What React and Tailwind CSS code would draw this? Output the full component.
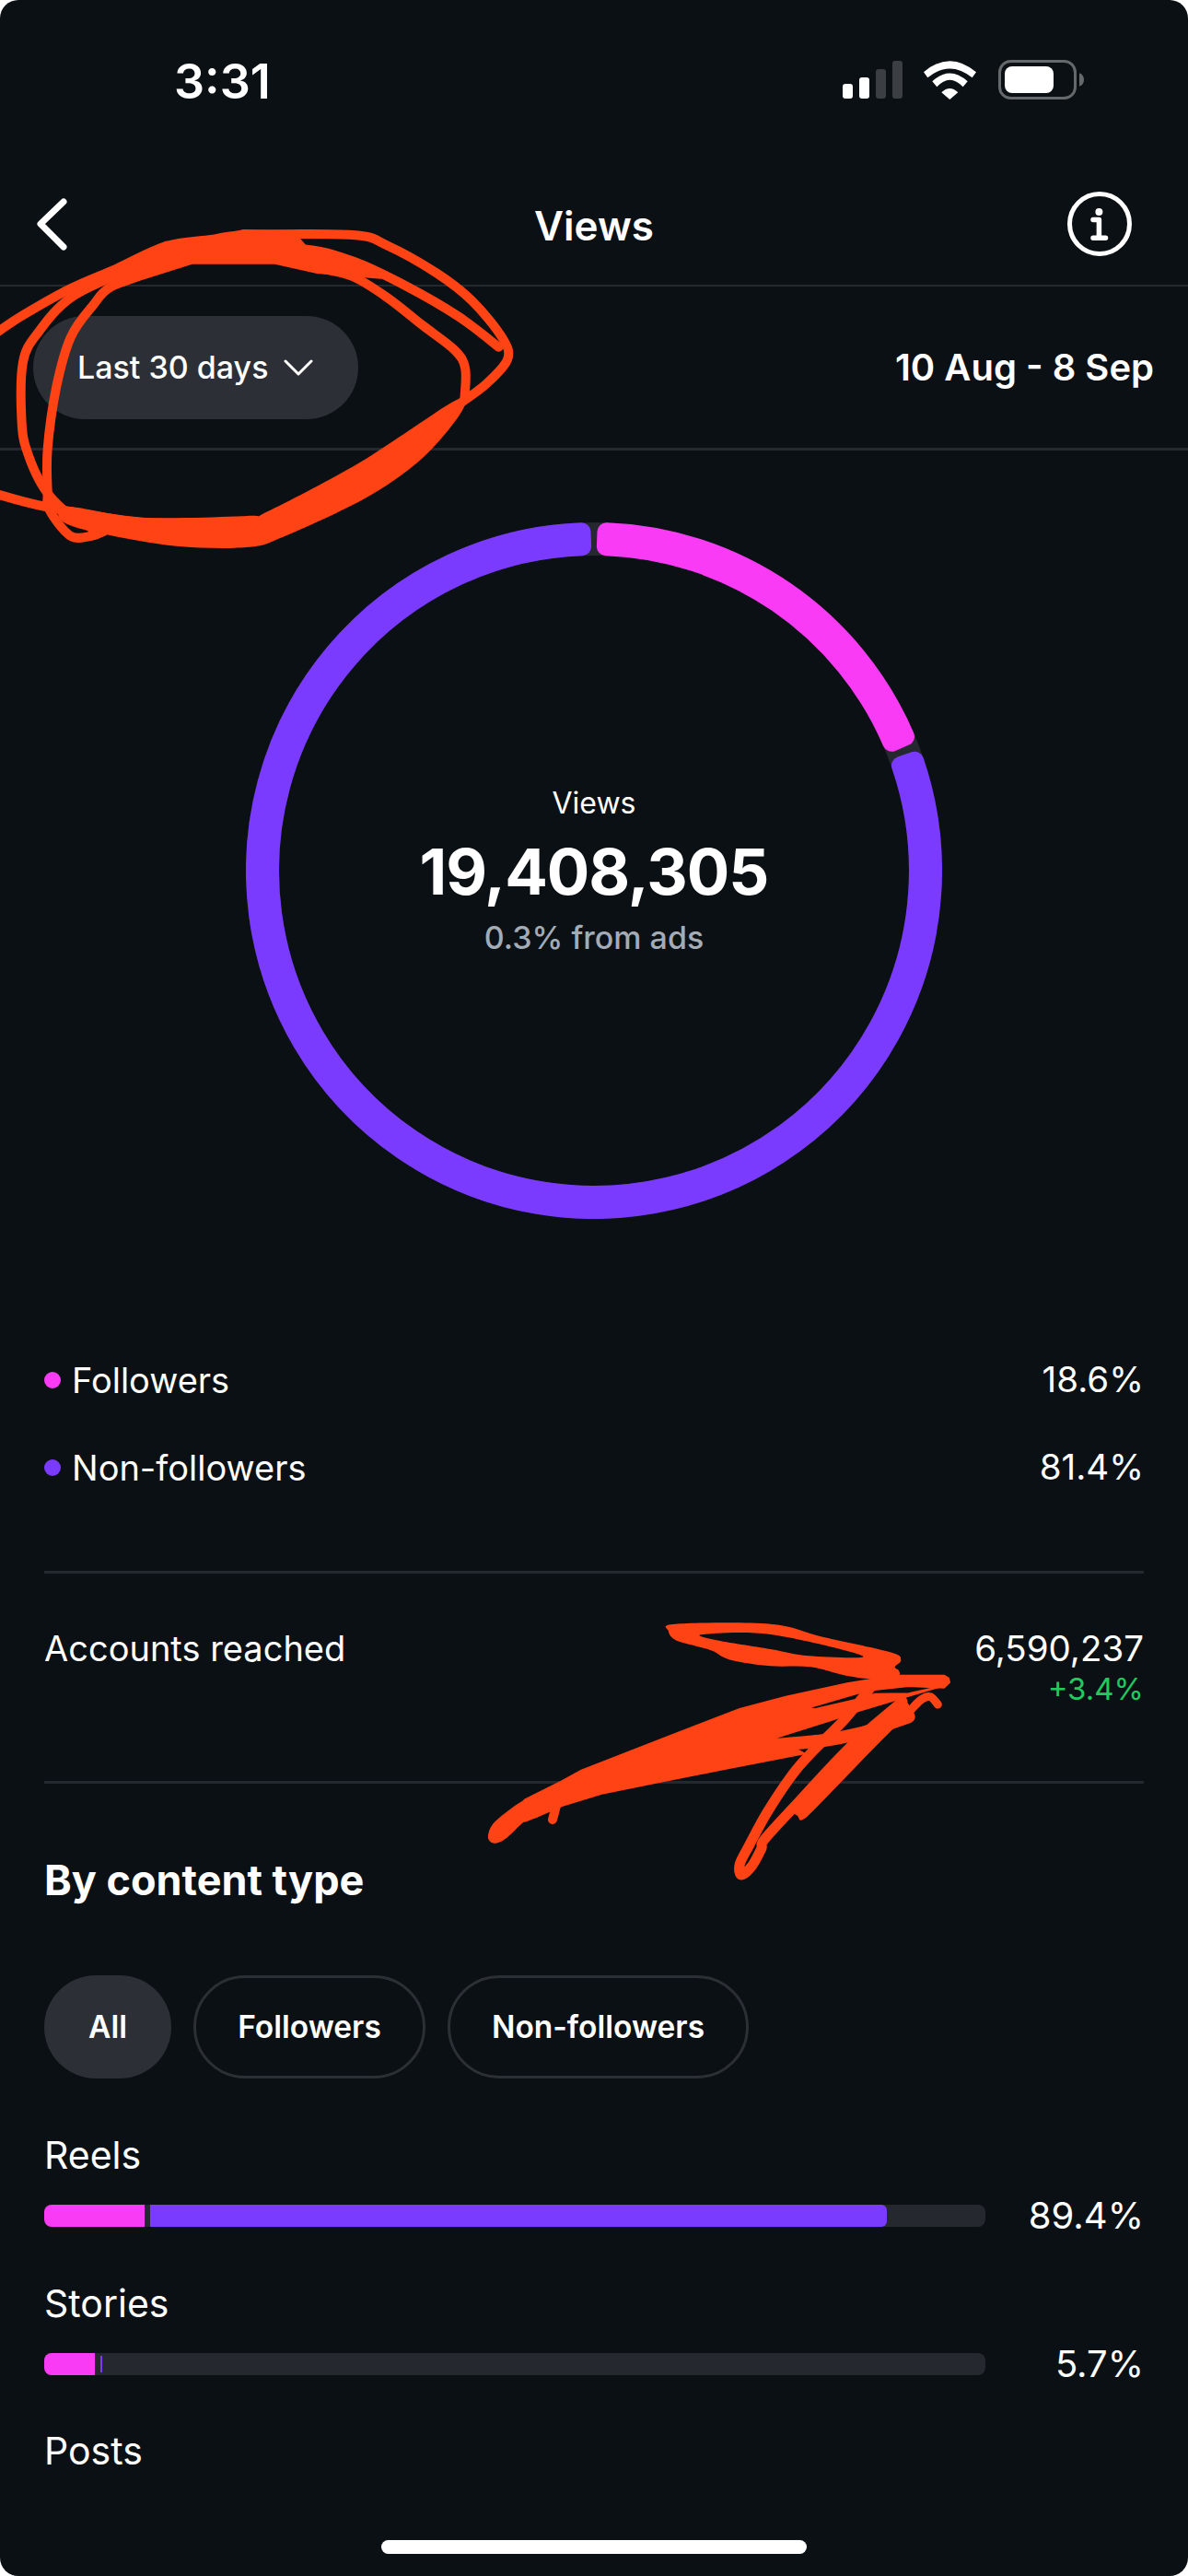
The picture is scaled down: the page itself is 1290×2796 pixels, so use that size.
import React from "react";

const PINK = "#f93bf5";
const PURPLE = "#7b3bff";
const RED = "#ff4314";

function polar(r, deg) {
  const a = (deg * Math.PI) / 180;
  return [378 + r * Math.sin(a), 378 - r * Math.cos(a)];
}
function band(from, to) {
  const inner = 352;
  const outer = 368;
  const large = to - from > 180 ? 1 : 0;
  const [x1, y1] = polar(outer, from);
  const [x2, y2] = polar(outer, to);
  const [x3, y3] = polar(inner, to);
  const [x4, y4] = polar(inner, from);
  return `M${x1} ${y1}A${outer} ${outer} 0 ${large} 1 ${x2} ${y2}L${x3} ${y3}A${inner} ${inner} 0 ${large} 0 ${x4} ${y4}Z`;
}

function curve(pts, ox, oy, sx, sy, closed) {
  const p = pts.map(([x, y]) => [ox + x / sx, oy + y / sy]);
  const n = p.length;
  const at = (i) => (closed ? p[(i + n) % n] : p[Math.max(0, Math.min(n - 1, i))]);
  let d = `M${p[0][0].toFixed(1)} ${p[0][1].toFixed(1)}`;
  const last = closed ? n : n - 1;
  for (let i = 0; i < last; i++) {
    const a = at(i - 1), b = at(i), c = at(i + 1), e = at(i + 2);
    const c1 = [b[0] + (c[0] - a[0]) / 6, b[1] + (c[1] - a[1]) / 6];
    const c2 = [c[0] - (e[0] - b[0]) / 6, c[1] - (e[1] - b[1]) / 6];
    d += `C${c1[0].toFixed(1)} ${c1[1].toFixed(1)} ${c2[0].toFixed(1)} ${c2[1].toFixed(1)} ${c[0].toFixed(1)} ${c[1].toFixed(1)}`;
  }
  return d + (closed ? "Z" : "");
}
function poly(pts, ox, oy, sx, sy) {
  return "M" + pts.map(([x, y]) => `${(ox + x / sx).toFixed(1)} ${(oy + y / sy).toFixed(1)}`).join("L") + "Z";
}

const C = (pts) => curve(pts, 0, 220, 2.613, 3, false);
const CF = (pts) => curve(pts, 0, 220, 2.613, 3, true);
const CP = (pts) => poly(pts, 0, 220, 2.613, 3);
const A = (pts) => curve(pts, 520, 1750, 3, 3, false);
const AF = (pts) => curve(pts, 520, 1750, 3, 3, true);
const AP = (pts) => poly(pts, 520, 1750, 3, 3);

function Scribbles() {
  return (
    <svg className="absolute left-0 top-0 pointer-events-none" width="1290" height="2796" viewBox="0 0 1290 2796" fill="none">
      <g stroke={RED} strokeWidth="10" strokeLinecap="round" strokeLinejoin="round">
        <path d={C([[-20,432],[60,370],[200,280],[330,215],[470,142],[600,120],[700,105],[1000,105],[1100,140],[1240,230],[1340,320],[1425,440],[1440,510],[1380,590],[1310,650]])} />
        <path d={C([[1415,470],[1300,370],[1150,270],[1000,190],[850,150],[600,160],[470,160],[350,225],[200,310],[110,420],[65,520],[62,720],[80,820],[125,930],[185,1005],[260,1060]])} />
        <path d={C([[1318,640],[1320,540],[1290,480],[1200,400],[1100,310],[1000,240],[900,212],[780,180],[540,180],[330,265],[260,340],[200,440],[160,600],[135,800],[135,940],[140,1000],[200,1085],[260,1085],[295,1070]])} />
        <path d={C([[-20,945],[130,990],[400,1040],[700,1040]])} />
      </g>
      <path fill={RED} d={CF([[190,990],[400,1025],[700,1020],[760,1005],[1000,860],[1150,750],[1300,640],[1310,680],[1200,830],[1040,960],[800,1090],[700,1122],[500,1118],[300,1080],[180,1040]])} />
      <path fill={RED} stroke={RED} strokeWidth="2" strokeLinejoin="round" d={CP([[470,128],[570,128],[690,90],[830,92],[870,145],[1010,195],[1080,245],[900,228],[780,197],[545,197],[400,250],[300,290],[360,210]])} />

      <g fill={RED} stroke={RED} strokeWidth="2" strokeLinejoin="round">
        <path d={AP([[270,550],[330,517],[630,400],[850,315],[1000,275],[1200,232],[1300,215],[1240,262],[1075,310],[1150,340],[960,405],[1060,460],[800,510],[600,550],[400,590],[270,630],[200,660],[150,680],[110,660],[150,610]])} />
        <path d={AP([[960,410],[1075,320],[1240,282],[1290,266],[1400,265],[1510,240],[1400,272],[1225,325],[1150,350]])} />
        <path d={AP([[1290,218],[1370,206],[1515,206],[1530,215],[1533,228],[1515,245],[1400,240],[1290,252]])} />
      </g>
      <path fill={RED} d={AF([[30,725],[45,690],[90,650],[150,610],[210,590],[200,660],[150,680],[90,735],[55,752],[35,745]])} />
      <path fill={RED} fillRule="evenodd" d={AF([[618,62],[640,38],[950,38],[1120,80],[1340,130],[1375,155],[1355,178],[1368,190],[1365,207],[1300,218],[1200,207],[1080,178],[950,175],[820,155],[760,125],[700,108],[640,90]]) + AF([[730,72],[950,72],[1250,142],[1075,142],[950,120],[770,90]])} />
      <g stroke={RED} strokeLinecap="round" strokeLinejoin="round">
        <path strokeWidth="14" d={A([[960,432],[1120,418],[1250,392],[1310,372],[1400,340]])} />
        <path strokeWidth="11" d={A([[1280,240],[1190,350],[1090,450],[1020,530],[940,650],[880,760],[850,820],[855,855],[890,825],[920,770],[930,740],[1030,630],[1150,500],[1250,400],[1380,290]])} />
        <path strokeWidth="9" d={A([[1405,320],[1440,285],[1470,275],[1495,300]])} />
        <path strokeWidth="10" d={A([[252,630],[240,675]])} />
      </g>
      <path fill={RED} d={AF([[1040,665],[1055,675],[1110,625],[1360,370],[1415,345],[1410,320],[1380,290],[1300,360],[1150,500],[1030,630]])} />
    </svg>
  );
}

function Signal() {
  return (
    <svg width="65" height="41" viewBox="0 0 65 41">
      <rect x="0" y="25" width="11" height="16" rx="3" fill="#fff" />
      <rect x="18" y="18" width="11" height="23" rx="3" fill="#fff" />
      <rect x="36" y="9" width="11" height="32" rx="3" fill="#3b3f43" />
      <rect x="54" y="0" width="11" height="41" rx="3" fill="#3b3f43" />
    </svg>
  );
}
function Wifi() {
  return (
    <svg width="58" height="42" viewBox="0 0 58 42" fill="#fff">
      <path d="M0 12.3Q28.3-12 57 12.3L52.7 18.3Q28.3-1.5 4.3 18.3Z" />
      <path d="M9.3 22.3Q28.3 4.5 47.7 22.3L42.7 28.3Q28.3 13 14.3 28.3Z" />
      <path d="M19.3 34.3Q28.3 25.5 37.3 34.3L28.3 42Z" />
    </svg>
  );
}
function Battery() {
  return (
    <svg width="93" height="43" viewBox="0 0 93 43">
      <rect x="1.5" y="1.5" width="82" height="40" rx="12" fill="none" stroke="#66696c" strokeWidth="3" />
      <rect x="7" y="7" width="53" height="29" rx="8" fill="#fff" />
      <path d="M88 14.5C91 15 93 18 93 21.5C93 25 91 28 88 28.5Z" fill="#66696c" />
    </svg>
  );
}
function Back() {
  return (
    <svg width="40" height="60" viewBox="0 0 40 60" fill="none" stroke="#fff" strokeWidth="7" strokeLinecap="round" strokeLinejoin="round">
      <path d="M33 6L8 30L33 55" />
    </svg>
  );
}
function Info() {
  return (
    <svg width="70" height="70" viewBox="0 0 70 70" fill="none" stroke="#fff">
      <circle cx="35" cy="35" r="32.5" strokeWidth="5" />
      <circle cx="34.4" cy="22" r="4" fill="#fff" stroke="none" />
      <path d="M28 30.5H34.4V50.3M28 50.3H41.5" strokeWidth="5.5" strokeLinecap="round" strokeLinejoin="round" />
    </svg>
  );
}
function Chevron() {
  return (
    <svg width="32" height="18" viewBox="0 0 32 18" fill="none" stroke="#fff" strokeWidth="3" strokeLinecap="round" strokeLinejoin="round">
      <path d="M2 2L16 16L30 2" />
    </svg>
  );
}

function Ring() {
  return (
    <svg className="absolute inset-0" width="756" height="756" viewBox="0 0 756 756">
      <circle cx="378" cy="378" r="360" fill="none" stroke="#25282e" strokeWidth="36" />
      <g strokeWidth="20" strokeLinejoin="round">
        <path d={band(2.1, 66.7)} fill={PINK} stroke={PINK} />
        <path d={band(71.1, 357.9)} fill={PURPLE} stroke={PURPLE} />
      </g>
    </svg>
  );
}

function Bar({ label, pct, children }) {
  return (
    <div className="h-[160.5px]">
      <div className="text-[41px] leading-[46px] text-white">{label}</div>
      {pct && (
        <div className="mt-[20px] flex items-center justify-between">
          <div className="relative flex h-[24px] w-[1022px] overflow-hidden rounded-[8px] bg-[#25282e]">{children}</div>
          <div className="text-[40px] leading-[46px] text-white">{pct}</div>
        </div>
      )}
    </div>
  );
}

export default function App() {
  return (
    <div className="h-[2796px] w-[1290px] overflow-hidden bg-white" style={{ fontFamily: "Inter, 'Liberation Sans', sans-serif" }}>
      <div className="relative h-full overflow-hidden rounded-[20px] bg-[#0b1014]">
        <div className="flex h-[177px] items-center justify-between pl-[189px] pr-[113px]">
          <div className="text-[52px] font-semibold leading-none text-white">3:31</div>
          <div className="flex items-center gap-[23px] pb-[4px]">
            <Signal />
            <Wifi />
            <Battery />
          </div>
        </div>
        <div className="grid h-[134px] grid-cols-[1fr_auto_1fr] items-center border-b-2 border-[#25282e] px-[36px]">
          <div className="flex">
            <Back />
          </div>
          <div className="pt-[3px] text-[44px] font-semibold leading-none text-white">Views</div>
          <div className="flex justify-end pr-[25px]">
            <Info />
          </div>
        </div>
        <div className="flex h-[178px] items-center justify-between border-b-[3px] border-[#25282e] pl-[36px] pr-[37px]">
          <div className="flex h-[112px] w-[353px] items-center gap-[17px] rounded-full bg-[#2c3036] pl-[48px]">
            <span className="text-[34px] font-medium leading-none text-white">Last 30 days</span>
            <Chevron />
          </div>
          <div className="text-[40px] font-semibold leading-none text-white">10 Aug - 8 Sep</div>
        </div>

        <div className="flex justify-center pt-[78px]">
          <div className="relative h-[756px] w-[756px]">
            <Ring />
            <div className="absolute inset-0 flex flex-col items-center justify-center">
              <div className="text-[32px] leading-[40px] text-white">Views</div>
              <div className="mt-[14px] text-[69px] font-bold leading-[80px] tracking-[-1px] text-white">19,408,305</div>
              <div className="mt-[12px] text-[34px] font-medium leading-[40px] text-[#a3abb7]">0.3% from ads</div>
            </div>
          </div>
        </div>

        <div className="px-[48px] pt-[127px]">
          <div className="flex h-[95px] items-center justify-between">
            <div className="flex items-center gap-[12px]">
              <span className="h-[18px] w-[18px] rounded-full bg-[#f93bf5]" />
              <span className="text-[38px] leading-none text-white">Followers</span>
            </div>
            <span className="text-[38.5px] leading-none text-white">18.6%</span>
          </div>
          <div className="flex h-[95px] items-center justify-between">
            <div className="flex items-center gap-[12px]">
              <span className="h-[18px] w-[18px] rounded-full bg-[#7b3bff]" />
              <span className="text-[38px] leading-none text-white">Non-followers</span>
            </div>
            <span className="text-[38.5px] leading-none text-white">81.4%</span>
          </div>

          <div className="mt-[65px] h-[231px] border-y-[3px] border-[#25282e] pt-[58px]">
            <div className="flex items-start justify-between">
              <div className="text-[38px] leading-[46px] text-white">Accounts reached</div>
              <div className="flex flex-col items-end">
                <div className="text-[38.5px] leading-[46px] text-white">6,590,237</div>
                <div className="pt-[3px] text-[33px] leading-[36px] text-[#1fcb5e]">+3.4%</div>
              </div>
            </div>
          </div>

          <div className="pt-[79px] text-[45px] font-bold leading-[52px] text-white">By content type</div>

          <div className="mt-[77px] flex gap-[24px]">
            <div className="flex h-[112px] w-[138px] items-center justify-center rounded-full bg-[#2c3036] text-[33.5px] font-semibold text-white">All</div>
            <div className="flex h-[112px] w-[252px] items-center justify-center rounded-full border-[3px] border-[#2c3036] text-[33.5px] font-semibold text-white">Followers</div>
            <div className="flex h-[112px] w-[327px] items-center justify-center rounded-full border-[3px] border-[#2c3036] text-[33.5px] font-semibold text-white">Non-followers</div>
          </div>

          <div className="mt-[60px]">
            <Bar label="Reels" pct="89.4%">
              <div className="h-full w-[109px] bg-[#f93bf5]" />
              <div className="ml-[6px] h-full w-[800px] rounded-r-[6px] bg-[#7b3bff]" />
            </Bar>
            <Bar label="Stories" pct="5.7%">
              <div className="h-full w-[55px] bg-[#f93bf5]" />
              <div className="ml-[6px] mt-[3px] h-[18px] w-[2px] bg-[#7b3bff]" />
            </Bar>
            <Bar label="Posts" />
          </div>
        </div>

        <Scribbles />
        <div className="absolute bottom-[24px] left-[414px] h-[15px] w-[462px] rounded-full bg-white" />
      </div>
    </div>
  );
}
